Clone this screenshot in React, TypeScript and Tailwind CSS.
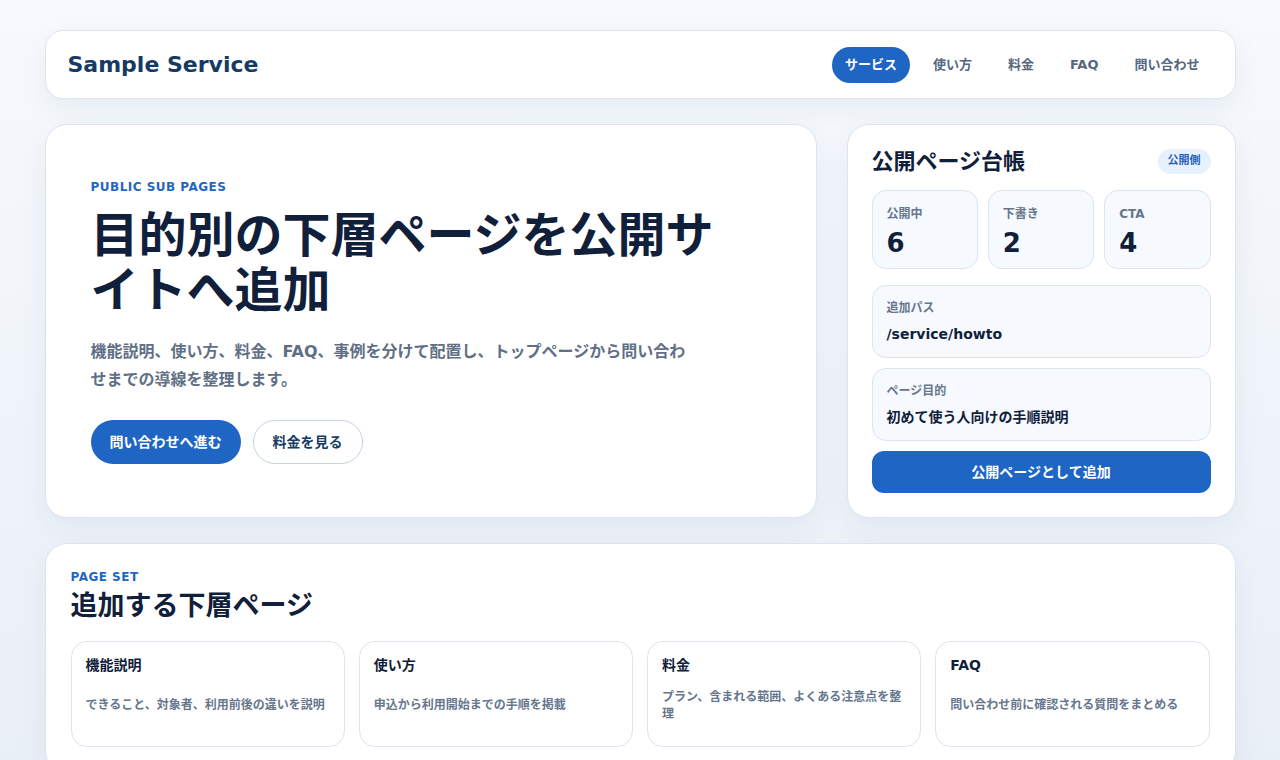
import React from "react";

const font = { fontFamily: '"DejaVu Sans", "Noto Sans CJK JP", sans-serif' };

const navItems = ["サービス", "使い方", "料金", "FAQ", "問い合わせ"];

const pages = [
  { title: "機能説明", desc: "できること、対象者、利用前後の違いを説明" },
  { title: "使い方", desc: "申込から利用開始までの手順を掲載" },
  { title: "料金", desc: "プラン、含まれる範囲、よくある注意点を整理" },
  { title: "FAQ", desc: "問い合わせ前に確認される質問をまとめる" },
];

export default function App() {
  return (
    <div
      style={font}
      className="min-h-screen bg-gradient-to-b from-[#f6f9fd] to-[#e9eff7] pt-[30px] pb-10"
    >
      <div className="mx-auto flex w-[1191px] flex-col gap-[25px]">
        {/* Header */}
        <header className="flex h-[69px] items-center justify-between rounded-[18px] border border-[#dbe4f0] bg-white px-[22px] shadow-[0_10px_30px_rgba(20,50,100,0.06)]">
          <div className="text-[22px] font-bold text-[#163a63]">Sample Service</div>
          <nav className="flex items-center gap-[10px]">
            {navItems.map((n, i) => (
              <div
                key={n}
                className={
                  i === 0
                    ? "flex h-[36px] items-center rounded-full bg-[#1f66c4] px-[13px] text-[13px] font-bold text-white"
                    : "flex h-[36px] items-center rounded-full px-[13px] text-[13px] font-bold text-[#55677f]"
                }
              >
                {n}
              </div>
            ))}
          </nav>
        </header>

        {/* Hero row */}
        <div className="grid grid-cols-[772px_389px] gap-[30px]">
          <section className="flex flex-col justify-center rounded-[22px] border border-[#dbe4f0] bg-white px-[45px] shadow-[0_10px_30px_rgba(20,50,100,0.06)]">
            <div className="text-[12px] font-bold tracking-[0.04em] text-[#1f66c4]">PUBLIC SUB PAGES</div>
            <h1 className="mt-[12px] max-w-[640px] text-[48px] font-bold leading-[55px] text-[#10203a]">
              目的別の下層ページを公開サイトへ追加
            </h1>
            <p className="mt-[20px] max-w-[600px] text-[16px] font-semibold leading-[28px] text-[#5f6f86]">
              機能説明、使い方、料金、FAQ、事例を分けて配置し、トップページから問い合わせまでの導線を整理します。
            </p>
            <div className="mt-[26px] flex gap-[12px]">
              <button className="h-[44px] rounded-full bg-[#1f66c4] px-[19px] text-[14px] font-bold text-white">
                問い合わせへ進む
              </button>
              <button className="h-[44px] rounded-full border border-[#c5d3e8] bg-white px-[19px] text-[14px] font-bold text-[#163a63]">
                料金を見る
              </button>
            </div>
          </section>

          <aside className="flex flex-col rounded-[22px] border border-[#dbe4f0] bg-white p-6 shadow-[0_10px_30px_rgba(20,50,100,0.06)]">
            <div className="flex h-[25px] items-center justify-between">
              <h2 className="text-[22px] font-bold text-[#10203a]">公開ページ台帳</h2>
              <span className="flex h-[25px] items-center rounded-full bg-[#e7f0fd] px-[10px] text-[11px] font-bold text-[#1f5fb8]">
                公開側
              </span>
            </div>
            <div className="mt-4 grid grid-cols-3 gap-[10px]">
              {[
                ["公開中", "6"],
                ["下書き", "2"],
                ["CTA", "4"],
              ].map(([l, v]) => (
                <div key={l} className="h-[79px] rounded-[14px] border border-[#dbe4f0] bg-[#f6f9fd] px-[14px] pt-[15px]">
                  <div className="text-[12px] font-bold leading-[16px] text-[#66768d]">{l}</div>
                  <div className="mt-[6px] text-[26px] font-bold leading-[30px] text-[#10203a]">{v}</div>
                </div>
              ))}
            </div>
            <div className="mt-4 flex flex-col gap-[10px]">
              <div className="h-[73px] rounded-[14px] border border-[#dbe4f0] bg-[#f6f9fd] px-[14px] pt-[14px]">
                <div className="text-[12px] font-bold leading-[16px] text-[#66768d]">追加パス</div>
                <div className="mt-[8px] text-[14px] font-bold leading-[20px] text-[#10203a]">/service/howto</div>
              </div>
              <div className="h-[73px] rounded-[14px] border border-[#dbe4f0] bg-[#f6f9fd] px-[14px] pt-[14px]">
                <div className="text-[12px] font-bold leading-[16px] text-[#66768d]">ページ目的</div>
                <div className="mt-[8px] text-[14px] font-bold leading-[20px] text-[#10203a]">初めて使う人向けの手順説明</div>
              </div>
              <button className="h-[42px] rounded-[12px] bg-[#1f66c4] text-[14px] font-bold text-white">
                公開ページとして追加
              </button>
            </div>
          </aside>
        </div>

        {/* Page set */}
        <section className="rounded-[22px] border border-[#dbe4f0] bg-white p-[25px] shadow-[0_10px_30px_rgba(20,50,100,0.06)]">
          <div className="text-[12px] font-bold leading-[16px] tracking-[0.04em] text-[#1f66c4]">PAGE SET</div>
          <h2 className="mt-[3px] text-[27px] font-bold leading-[36px] text-[#10203a]">追加する下層ページ</h2>
          <div className="mt-[17px] grid grid-cols-4 gap-[14px]">
            {pages.map((p) => (
              <div key={p.title} className="flex h-[106px] flex-col rounded-[16px] border border-[#dbe4f0] bg-white px-[14px] pt-[13px] pb-[10px]">
                <div className="text-[14px] font-bold leading-[20px] text-[#10203a]">{p.title}</div>
                <div className="flex flex-1 items-center">
                  <div className="text-[12px] font-bold leading-[17px] text-[#66768d]">{p.desc}</div>
                </div>
              </div>
            ))}
          </div>
        </section>
      </div>
    </div>
  );
}
